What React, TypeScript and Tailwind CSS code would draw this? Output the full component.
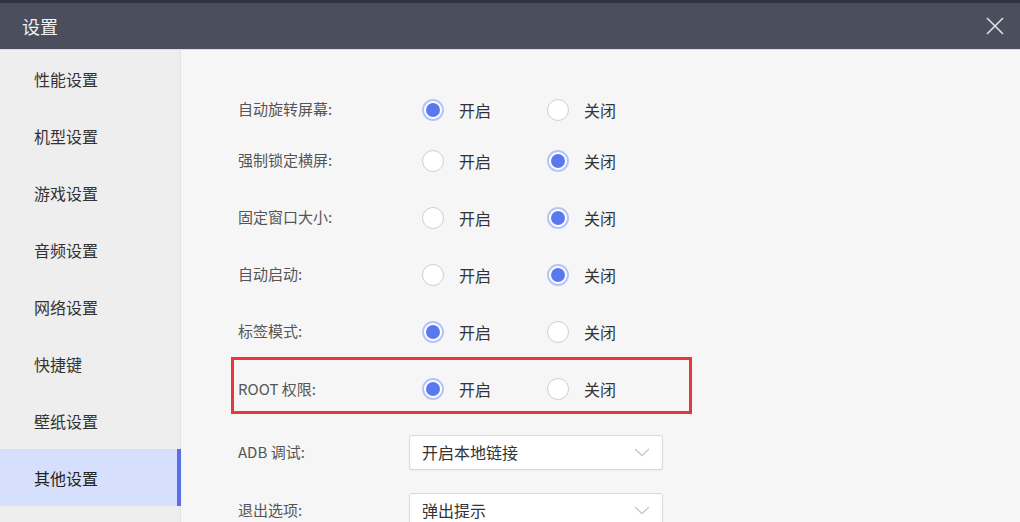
import React from "react";

const menu = ["性能设置", "机型设置", "游戏设置", "音频设置", "网络设置", "快捷键", "壁纸设置", "其他设置"];

const Radio = ({ checked, label }: { checked: boolean; label: string }) => (
  <div className="flex items-center w-[125px]">
    {checked ? (
      <span className="w-[22px] h-[22px] rounded-full border-2 border-[#b7c4f7] bg-white flex items-center justify-center">
        <span className="w-[14px] h-[14px] rounded-full bg-[#5a79ef]"></span>
      </span>
    ) : (
      <span className="w-[22px] h-[22px] rounded-full border border-[#cfcfcf] bg-white"></span>
    )}
    <span className="ml-[15px] text-[16px] text-[#333]">{label}</span>
  </div>
);

const RadioRow = ({ label, on, className = "h-[57px]" }: { label: string; on: boolean; className?: string }) => (
  <div className={`flex items-center ${className}`}>
    <p className="w-[184px] text-[15px] text-[#555]">{label}</p>
    <Radio checked={on} label="开启" />
    <Radio checked={!on} label="关闭" />
  </div>
);

const Select = ({ value }: { value: string }) => (
  <div className="w-[254px] h-[35px] bg-white border border-[#d9d9d9] rounded-[3px] flex items-center justify-between pl-[12px] pr-[12px] shadow-[0_1px_1px_rgba(0,0,0,0.04)]">
    <span className="text-[16px] text-[#333]">{value}</span>
    <svg width="16" height="9" viewBox="0 0 16 9" fill="none">
      <path d="M1 1l7 6.5L15 1" stroke="#c8c8c8" strokeWidth="1.3" />
    </svg>
  </div>
);

const App = () => {
  return (
    <div
      className="w-[1020px] h-[522px] overflow-hidden bg-[#f6f6f6] flex flex-col"
      style={{ fontFamily: '"Noto Sans CJK SC", "Noto Sans", sans-serif' }}
    >
      {/* header */}
      <div className="h-[50px] shrink-0 bg-[#4b4e5d] border-t-[3px] border-[#2f3241] border-b border-b-[#dcdcdc] flex items-center justify-between pl-[22px] pr-[15px]">
        <p className="text-[18px] text-[#f2f2f2]">设置</p>
        <svg width="20" height="20" viewBox="0 0 20 20" fill="none">
          <path d="M2 2l16 16M18 2L2 18" stroke="#e0e0e6" strokeWidth="1.6" />
        </svg>
      </div>

      <div className="flex flex-1">
        {/* sidebar */}
        <div className="w-[181px] shrink-0 bg-[#eeeeee] border-r border-[#e2e2e2]">
          {menu.map((m, i) =>
            i === 7 ? (
              <div key={m} className="h-[57px] bg-[#d6e0fc] border-r-[4px] border-[#5b6fe8] flex items-center pl-[34px] -mr-[1px]">
                <span className="text-[16px] text-[#222]">{m}</span>
              </div>
            ) : (
              <div key={m} className="h-[57px] flex items-center pl-[34px]">
                <span className="text-[16px] text-[#333]">{m}</span>
              </div>
            )
          )}
        </div>

        {/* content */}
        <div className="flex-1 pl-[57px] pt-[37px]">
          <RadioRow label="自动旋转屏幕:" on={true} className="h-[45px]" />
          <RadioRow label="强制锁定横屏:" on={false} />
          <RadioRow label="固定窗口大小:" on={false} />
          <RadioRow label="自动启动:" on={false} />
          <RadioRow label="标签模式:" on={true} />

          {/* root */}
          <div className="w-[461px] h-[57px] -ml-[7px] mt-[-3px] border-[3px] border-[#e3383c] flex items-center pl-[4px] pt-[7px]">
            <p className="w-[184px] text-[15px] text-[#555]">ROOT 权限:</p>
            <Radio checked={true} label="开启" />
            <Radio checked={false} label="关闭" />
          </div>

          <div className="flex items-center h-[58px] mt-[9px]">
            <p className="w-[171px] text-[15px] text-[#555]">ADB 调试:</p>
            <Select value="开启本地链接" />
          </div>
          <div className="flex items-center h-[58px]">
            <p className="w-[171px] text-[15px] text-[#555]">退出选项:</p>
            <Select value="弹出提示" />
          </div>
        </div>
      </div>
    </div>
  );
};

export default App;
